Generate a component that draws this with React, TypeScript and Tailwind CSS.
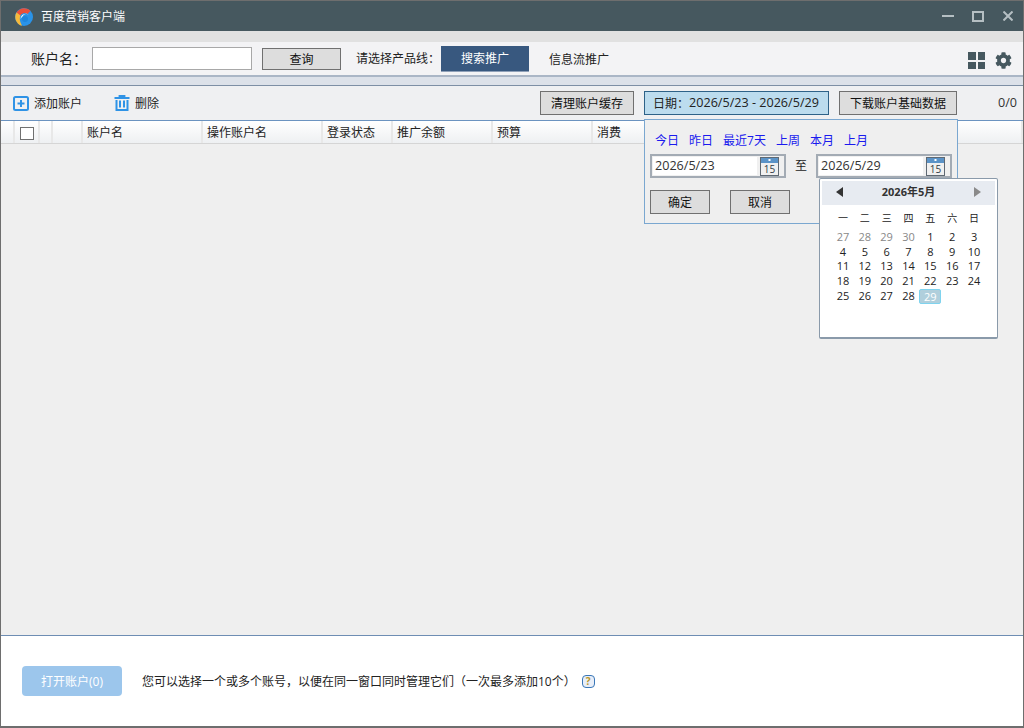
import { FaCog } from "react-icons/fa";

const FONT = "[font-family:'Open_Sans','Noto_Sans_CJK_SC',sans-serif]";

const columns = [
  { name: "", width: "w-[14px]" },
  { name: "", width: "w-[25px]" },
  { name: "", width: "w-[13px]" },
  { name: "", width: "w-[30px]" },
  { name: "账户名", width: "w-[120px]" },
  { name: "操作账户名", width: "w-[120px]" },
  { name: "登录状态", width: "w-[70px]" },
  { name: "推广余额", width: "w-[100px]" },
  { name: "预算", width: "w-[100px]" },
  { name: "消费", width: "flex-1" },
];

const shortcuts = ["今日", "昨日", "最近7天", "上周", "本月", "上月"];
const weekdays = ["一", "二", "三", "四", "五", "六", "日"];
const prevMonth = [27, 28, 29, 30];

function Logo() {
  return (
    <svg width="18" height="18" viewBox="0 0 18 18" className="shrink-0">
      <circle cx="9" cy="9" r="9" fill="#2a93e8" />
      <path d="M1.5 4.5 A9 9 0 0 1 15.5 2.8 L12.5 6 A5 5 0 0 0 5 8 Z" fill="#e9503a" />
      <path d="M1.5 4.5 A9 9 0 0 0 7 17.8 Q3.5 12 5.5 7.5 Z" fill="#f6b93b" />
      <path d="M5.5 11 A5.5 5.5 0 0 1 14.5 7 A4.5 4.5 0 0 0 7.5 8.5 Q6 9.5 5.5 11 Z" fill="#ffffff" />
      <circle cx="10" cy="11" r="3" fill="#1f86dc" />
    </svg>
  );
}

function CalendarIcon() {
  return (
    <svg width="19" height="19" viewBox="0 0 19 19" className="shrink-0">
      <rect x="0.5" y="0.5" width="18" height="18" fill="#f0f0f0" stroke="#5f6973" />
      <rect x="1" y="1" width="17" height="5" fill="#5b93c7" />
      <rect x="8.5" y="2" width="2" height="2" fill="#ffffff" />
      <text x="9.5" y="16" textAnchor="middle" fontSize="10" fill="#333b44" fontFamily="Open Sans">
        15
      </text>
    </svg>
  );
}

function GrayButton({ label, className }: { label: string; className: string }) {
  return (
    <button className={`h-6 border border-[#707070] bg-[#dddddd] pt-[2px] text-xs text-[#111] ${className}`}>
      {label}
    </button>
  );
}

function DateField({ value }: { value: string }) {
  return (
    <div className="flex h-6 w-[136px] items-center border-2 border-[#a3abb4] bg-[#f0f0f0] pl-px">
      <div className="mr-[3px] flex h-[18px] w-[104px] items-center bg-white pl-[2px] text-[12.6px] text-[#333]">
        {value}
      </div>
      <CalendarIcon />
    </div>
  );
}

function CalendarPopup() {
  return (
    <div className="absolute left-[818px] top-[177px] h-[161px] w-[179px] rounded-[2px] border border-[#8a9aaa] border-b-2 bg-white p-[2px]">
      <div className="flex h-6 items-center justify-between bg-[#e7ebf1] pb-[2px] pl-[14px] pr-[14px]">
        <span className="h-0 w-0 border-y-[5px] border-r-[7px] border-y-transparent border-r-[#333]" />
        <span className="text-[11px] font-bold text-[#333]">2026年5月</span>
        <span className="h-0 w-0 border-y-[5px] border-l-[7px] border-y-transparent border-l-[#8a8a8a]" />
      </div>
      <div className="mt-[6px] grid grid-cols-7 px-[10px] text-center text-[10px] leading-[14px] text-[#222]">
        {weekdays.map((d) => (
          <div key={d}>{d}</div>
        ))}
      </div>
      <div className="mt-[5px] grid grid-cols-7 px-[10px] text-center text-[11px] leading-[14.7px] text-[#222]">
        {prevMonth.map((d) => (
          <div key={`p${d}`} className="text-[#888]">
            {d}
          </div>
        ))}
        {Array.from({ length: 28 }, (_, i) => i + 1).map((d) => (
          <div key={d}>{d}</div>
        ))}
        <div className="rounded-[2px] border border-[#7fd3ee] bg-[#b0cfdc] leading-[13px] text-white">
          29
        </div>
      </div>
    </div>
  );
}

function DatePopup() {
  return (
    <div className="absolute left-[643px] top-[118px] h-[105px] w-[314px] border border-[#7aa7d0] bg-[#efefef] px-[5px]">
      <div className="mt-[12px] flex gap-[10px] pl-[5px] text-xs leading-[18px] text-[#1a1aee]">
        {shortcuts.map((s) => (
          <span key={s} className="whitespace-nowrap">
            {s}
          </span>
        ))}
      </div>
      <div className="mt-[4px] flex items-center">
        <DateField value="2026/5/23" />
        <span className="w-[30px] text-center text-xs text-[#222]">至</span>
        <DateField value="2026/5/29" />
      </div>
      <div className="mt-3 flex gap-5">
        <GrayButton label="确定" className="w-[60px]" />
        <GrayButton label="取消" className="w-[60px]" />
      </div>
    </div>
  );
}

export default function App() {
  return (
    <div className={`relative flex h-[728px] w-[1024px] flex-col overflow-hidden border border-[#6e6e6e] border-b-2 bg-white text-xs text-[#222] ${FONT}`}>
      {/* title bar */}
      <div className="flex h-[30px] shrink-0 items-center bg-[#46585f] pl-[14px] pr-[10px] pt-[2px]">
        <Logo />
        <span className="ml-2 text-xs text-white">百度营销客户端</span>
        <div className="-mt-[2px] ml-auto flex items-center">
          <span className="h-[2px] w-3 bg-[#b5bfc3]" />
          <span className="ml-[18px] h-[11px] w-3 border-2 border-[#b5bfc3]" />
          <svg width="10" height="10" viewBox="0 0 10 10" className="ml-[19px]">
            <path d="M0.5 0.5 L9.5 9.5 M9.5 0.5 L0.5 9.5" stroke="#b5bfc3" strokeWidth="2" />
          </svg>
        </div>
      </div>
      <div className="h-[11px] shrink-0 bg-[#e1e1e1]" />

      {/* search row */}
      <div className="flex h-[33px] shrink-0 items-center bg-[#f3f3f5] pl-[30px] pr-[11px]">
        <span className="w-[61px] text-sm text-[#222]">账户名：</span>
        <div className="h-[23px] w-[160px] border border-[#a8a8a8] bg-white" />
        <button className="ml-[10px] h-[22px] w-[79px] border border-[#707070] bg-[#dddddd] pt-[2px] text-xs text-[#111]">
          查询
        </button>
        <span className="ml-[15px] w-[85px] whitespace-nowrap">请选择产品线：</span>
        <div className="flex h-[26px] w-[88px] items-center justify-center border-b border-[#8fa0b8] bg-[#38587f] pt-[2px] text-white">
          搜索推广
        </div>
        <div className="flex h-[26px] w-[100px] items-center justify-center pt-[2px]">信息流推广</div>
        <div className="ml-auto mt-1 grid grid-cols-2 gap-[2px]">
          <span className="h-[7.5px] w-[7.5px] bg-[#46585f]" />
          <span className="h-[7.5px] w-[7.5px] bg-[#46585f]" />
          <span className="h-[7.5px] w-[7.5px] bg-[#46585f]" />
          <span className="h-[7.5px] w-[7.5px] bg-[#46585f]" />
        </div>
        <FaCog className="ml-[10px] mt-1 h-[17px] w-[17px] text-[#46585f]" />
      </div>
      <div className="h-[2px] shrink-0 bg-[#aab6c6]" />
      <div className="h-2 shrink-0 bg-[#dce1e9]" />

      {/* action row */}
      <div className="flex h-[36px] shrink-0 items-center border-y border-t-[#7d8fa5] border-b-[#6b93c0] bg-[#eff0f2] pl-3 pr-[6px]">
        <svg width="16" height="15" viewBox="0 0 16 15" className="mt-px">
          <rect x="1" y="1" width="14" height="13" rx="1.5" fill="none" stroke="#2f93e6" strokeWidth="2" />
          <path d="M8 4 V11 M4.5 7.5 H11.5" stroke="#2f93e6" strokeWidth="2" />
        </svg>
        <span className="ml-[5px] pt-[2px]">添加账户</span>
        <svg width="16" height="16" viewBox="0 0 16 16" className="ml-8">
          <path d="M5.5 2.5 V1 H10.5 V2.5 M0.5 3 H15.5" fill="none" stroke="#2f93e6" strokeWidth="1.8" />
          <path d="M2.5 5 V15 H13.5 V5 M6 5.5 V12.5 M10 5.5 V12.5" fill="none" stroke="#2f93e6" strokeWidth="2" />
        </svg>
        <span className="ml-[5px] pt-[2px]">删除</span>
        <GrayButton label="清理账户缓存" className="ml-[381px] w-[94px]" />
        <div className="ml-[10px] flex h-6 w-[185px] items-center border border-[#2e6288] bg-[#bcdcee] pl-2 text-[12.6px] text-[#222]">
          <span className="w-9 shrink-0 pt-px text-xs">日期：</span>2026/5/23 - 2026/5/29
        </div>
        <GrayButton label="下载账户基础数据" className="ml-[10px] w-[118px]" />
        <span className="ml-auto text-[12.6px] text-[#333]">0/0</span>
      </div>

      {/* table header */}
      <div className="flex h-[23px] shrink-0 border-b border-[#d5d5d5] bg-gradient-to-b from-white to-[#eef0f2]">
        {columns.map((c, i) => (
          <div key={i} className={`flex items-center border-r-2 border-[#e8e8e8] pl-1 pt-[2px] ${c.width} ${i === 1 ? "pl-[5px]" : ""}`}>
            {i === 1 ? <span className="h-[13px] w-[14px] shrink-0 border border-[#707070] bg-white" /> : c.name}
          </div>
        ))}
      </div>

      {/* table body */}
      <div className="flex-1 bg-[#efefef]" />

      {/* footer */}
      <div className="flex h-[91px] shrink-0 items-center border-t border-[#6e8db3] bg-white pl-[21px]">
        <button className="h-[30px] w-[100px] rounded-[4px] bg-[#9cc6ec] pt-[2px] text-white">打开账户(0)</button>
        <span className="ml-5 whitespace-nowrap pt-[2px] text-[#222]">
          您可以选择一个或多个账号，以便在同一窗口同时管理它们（一次最多添加10个）
        </span>
        <span className="ml-[6px] flex h-[13px] w-[13px] items-center justify-center rounded-[4px] border-[1.5px] border-[#3a77b8] bg-[#e8eef8] text-[10px] font-bold leading-none text-[#b8962a]">
          ?
        </span>
      </div>

      <DatePopup />
      <CalendarPopup />
    </div>
  );
}
